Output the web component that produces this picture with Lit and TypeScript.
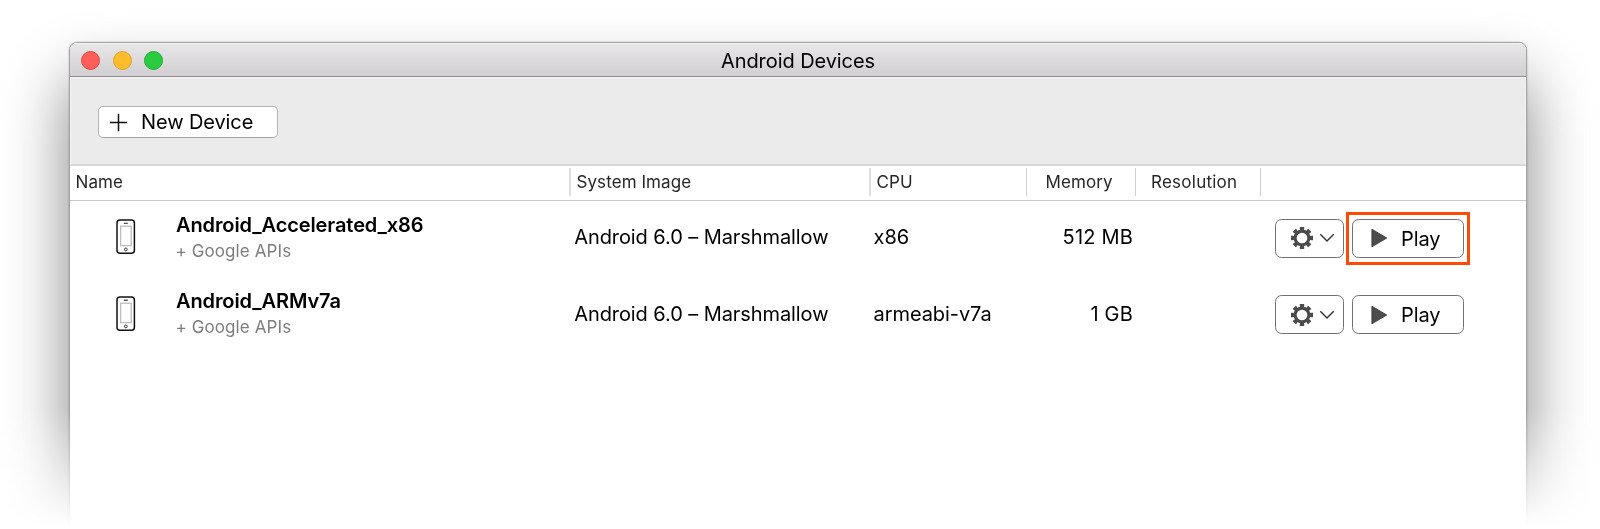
import { LitElement, html, css, svg } from "lit";
import { customElement, property } from "lit/decorators.js";
import { classMap } from "lit/directives/class-map.js";

interface Device {
  name: string;
  api: string;
  image: string;
  cpu: string;
  memory: string;
  active: boolean;
}

const DEVICES: Device[] = [
  { name: "Android_Accelerated_x86", api: "+ Google APIs", image: "Android 6.0 – Marshmallow", cpu: "x86", memory: "512 MB", active: true },
  { name: "Android_ARMv7a", api: "+ Google APIs", image: "Android 6.0 – Marshmallow", cpu: "armeabi-v7a", memory: "1 GB", active: false },
];

const TEETH = [0, 45, 90, 135, 180, 225, 270, 315];

const phoneIcon = html`<svg class="phone" width="20" height="36" viewBox="0 0 20 36">
  <rect x="1" y="1" width="17.4" height="33.2" rx="3" fill="#fff" stroke="#111" stroke-width="1.5" />
  <rect x="4.6" y="7.2" width="10.6" height="19.4" fill="#fff" stroke="#bdbdbd" stroke-width="1.3" />
  <path d="M7.8 4.2h4" stroke="#222" stroke-width="1.1" />
  <circle cx="9.8" cy="30.4" r="1.4" fill="none" stroke="#333" stroke-width="1" />
</svg>`;

const gearIcon = html`<svg class="gear" width="24" height="24" viewBox="-12 -12 24 24">
  ${TEETH.map((a) => svg`<path d="M-2.2-11H2.2V-9.4L1.6-7H-1.6L-2.2-9.4Z" transform="rotate(${a})" fill="#4b4b4b" />`)}
  <circle r="6.9" fill="none" stroke="#4b4b4b" stroke-width="3.1" />
</svg>`;

const chevronIcon = html`<svg class="chevron" width="16" height="10" viewBox="0 0 16 10">
  <path d="M1.3 1.2L8 7.9L14.7 1.2" fill="none" stroke="#333" stroke-width="1.4" />
</svg>`;

const playIcon = html`<svg class="triangle" width="17" height="20" viewBox="0 0 17 20">
  <path d="M.9 1.2L15.8 10L.9 18.8Z" fill="#4c4c4c" stroke="#333" stroke-width=".8" />
</svg>`;

@customElement("device-row")
class DeviceRow extends LitElement {
  @property({ attribute: false }) device!: Device;

  static styles = css`
    :host {
      display: grid;
      grid-template-columns: 106px 393px 299px 158px 109px 137px auto;
      height: 76.5px;
      align-items: center;
      font-size: 20px;
      letter-spacing: -0.08px;
      line-height: 24px;
      color: #000;
      white-space: nowrap;
    }
    .phone { display: block; margin-left: 46px; margin-top: -4px; }
    .name { font-weight: 600; letter-spacing: -0.1px; }
    .api { font-size: 17px; letter-spacing: 0.1px; color: #7d7d7d; margin: 3px 0 0 -0.5px; line-height: 22px; }
    .title { margin-top: -4px; }
    .image, .cpu, .memory { margin-top: -4px; }
    .image { padding-left: 5.2px; }
    .cpu { padding-left: 5.6px; }
    .memory { text-align: right; padding-right: 2px; letter-spacing: 0.2px; }
    .actions { grid-column: 7; display: flex; align-items: center; margin-top: -2px; }
    .button {
      box-sizing: border-box;
      height: 39px;
      border: 1.4px solid #707070;
      border-radius: 6.5px;
      background: #fff;
      display: flex;
      align-items: center;
    }
    .menu { width: 69px; padding-left: 13.5px; margin-left: 3.4px; gap: 5.5px; }
    .play { width: 112px; padding-left: 18px; gap: 13px; }
    .ring { padding: 4px 3.4px; border: 3px solid transparent; margin-left: 1.2px; }
    .ring.on { border-color: #ff4a05; }
    .label { margin-top: 1px; }
  `;

  render() {
    const d = this.device;
    return html`
      ${phoneIcon}
      <div class="title">
        <div class="name">${d.name}</div>
        <div class="api">${d.api}</div>
      </div>
      <div class="image">${d.image}</div>
      <div class="cpu">${d.cpu}</div>
      <div class="memory">${d.memory}</div>
      <div class="actions">
        <div class="button menu">${gearIcon}${chevronIcon}</div>
        <div class=${classMap({ ring: true, on: d.active })}>
          <div class="button play">${playIcon}<span class="label">Play</span></div>
        </div>
      </div>
    `;
  }
}

@customElement("app-root")
class AppRoot extends LitElement {
  static styles = css`
    :host {
      display: block;
      height: 529px;
      overflow: hidden;
      background: #fff;
      font-family: Inter, "Liberation Sans", sans-serif;
      color: #000;
    }
    .stage {
      box-sizing: border-box;
      height: 529px;
      padding: 42px 73px 0 69px;
      overflow: hidden;
      -webkit-mask-image: linear-gradient(#000 408px, transparent 527px);
      mask-image: linear-gradient(#000 408px, transparent 527px);
    }
    .window {
      box-sizing: border-box;
      height: 520px;
      border: 1px solid #a2a2a2;
      border-radius: 8px 8px 0 0;
      background: #fff;
      box-shadow: 0 38px 64px rgba(0, 0, 0, 0.48), 0 0 2px rgba(0, 0, 0, 0.25);
      overflow: hidden;
    }
    .titlebar {
      box-sizing: border-box;
      height: 34px;
      background: linear-gradient(#e9e7e9, #d1cfd1);
      border-bottom: 1px solid #8f8d8f;
      box-shadow: inset 0 1px #f6f5f6;
      display: grid;
      grid-template-columns: 100px 1fr 100px;
      align-items: center;
    }
    .lights { display: flex; gap: 12.4px; padding-left: 11.4px; margin-top: 1px; }
    .light { box-sizing: border-box; width: 19px; height: 19px; border-radius: 50%; border: 1px solid; }
    .close { background: #ff5f58; border-color: #e2453f; }
    .min { background: #ffbd2e; border-color: #e0a028; }
    .max { background: #29cb41; border-color: #1dad2c; }
    .caption { text-align: center; font-size: 20px; letter-spacing: -0.08px; line-height: 24px; margin-top: 2px; }
    .toolbar {
      box-sizing: border-box;
      height: 89px;
      padding: 28px 0 0 27px;
      background: #ebebeb;
      border: 1px solid #f5f5f5;
      border-bottom: 2px solid #d9d9d9;
    }
    .new {
      box-sizing: border-box;
      width: 180px;
      height: 32px;
      display: flex;
      align-items: center;
      gap: 13px;
      padding-left: 10px;
      border: 1px solid #b3b3b3;
      border-bottom-color: #a2a2a2;
      border-radius: 5px;
      background: #fff;
      font-size: 20px;
      letter-spacing: -0.1px;
      line-height: 24px;
    }
    .header {
      box-sizing: border-box;
      height: 35px;
      border-bottom: 1px solid #c9c9c9;
      display: grid;
      grid-template-columns: 501px 300px 156px 109px 125px auto;
      padding-top: 2px;
      font-size: 17px;
      letter-spacing: 0.08px;
      color: #262626;
    }
    .cell { box-sizing: border-box; height: 28px; line-height: 28px; padding-left: 5.5px; border-right: 2px solid #dedede; }
    .thin { border-right: 1px solid #cfcfcf; }
    .mem { padding-left: 18.5px; }
    .res { padding-left: 15px; letter-spacing: 0.25px; }
  `;

  render() {
    return html`
      <div class="stage">
        <div class="window">
          <div class="titlebar">
            <div class="lights">
              <span class="light close"></span><span class="light min"></span><span class="light max"></span>
            </div>
            <div class="caption">Android Devices</div>
          </div>
          <div class="toolbar">
            <div class="new">
              <svg width="19" height="19" viewBox="0 0 19 19">
                <path d="M.8 9.5H18.2M9.5 .8V18.2" stroke="#111" stroke-width="1.5" />
              </svg>
              <span>New Device</span>
            </div>
          </div>
          <div class="header">
            <div class="cell">Name</div>
            <div class="cell">System Image</div>
            <div class="cell thin">CPU</div>
            <div class="cell thin mem">Memory</div>
            <div class="cell thin res">Resolution</div>
          </div>
          ${DEVICES.map((d) => html`<device-row .device=${d}></device-row>`)}
        </div>
      </div>
    `;
  }
}
